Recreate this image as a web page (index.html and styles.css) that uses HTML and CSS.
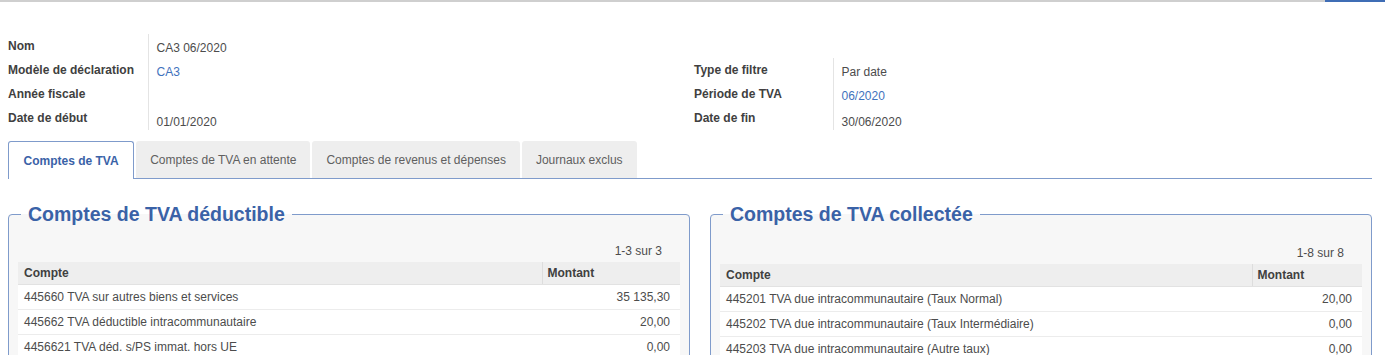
FILE: index.html
```html
<!DOCTYPE html>
<html lang="fr">
<head>
  <meta charset="UTF-8" />
  <title>CA3 06/2020</title>
  <link rel="stylesheet" href="styles.css">
</head>
<body>
  <div class="topbar">
    <div class="topbar-line"></div>
    <div class="topbar-btn"></div>
  </div>

  <div class="sheet">
    <div class="form-groups">
      <table class="group">
        <tr><td class="label">Nom</td><td class="value">CA3 06/2020</td></tr>
        <tr><td class="label">Modèle de déclaration</td><td class="value"><a href="#">CA3</a></td></tr>
        <tr><td class="label">Année fiscale</td><td class="value"></td></tr>
        <tr><td class="label">Date de début</td><td class="value low">01/01/2020</td></tr>
      </table>
      <table class="group group-right">
        <tr class="spacer"><td></td><td></td></tr>
        <tr><td class="label">Type de filtre</td><td class="value">Par date</td></tr>
        <tr><td class="label">Période de TVA</td><td class="value"><a href="#">06/2020</a></td></tr>
        <tr><td class="label">Date de fin</td><td class="value low">30/06/2020</td></tr>
      </table>
    </div>

    <ul class="tabs">
      <li class="tab active">Comptes de TVA</li>
      <li class="tab">Comptes de TVA en attente</li>
      <li class="tab">Comptes de revenus et dépenses</li>
      <li class="tab">Journaux exclus</li>
    </ul>

    <div class="panels">
      <fieldset class="box">
        <legend>Comptes de TVA déductible</legend>
        <div class="pager">1-3 sur 3</div>
        <table class="list">
          <thead>
            <tr><th>Compte</th><th class="amount-col">Montant</th></tr>
          </thead>
          <tbody>
            <tr><td>445660 TVA sur autres biens et services</td><td class="num">35 135,30</td></tr>
            <tr><td>445662 TVA déductible intracommunautaire</td><td class="num">20,00</td></tr>
            <tr><td>4456621 TVA déd. s/PS immat. hors UE</td><td class="num">0,00</td></tr>
          </tbody>
        </table>
      </fieldset>

      <fieldset class="box box-right">
        <legend>Comptes de TVA collectée</legend>
        <div class="pager">1-8 sur 8</div>
        <table class="list">
          <thead>
            <tr><th>Compte</th><th class="amount-col">Montant</th></tr>
          </thead>
          <tbody>
            <tr><td>445201 TVA due intracommunautaire (Taux Normal)</td><td class="num">20,00</td></tr>
            <tr><td>445202 TVA due intracommunautaire (Taux Intermédiaire)</td><td class="num">0,00</td></tr>
            <tr><td>445203 TVA due intracommunautaire (Autre taux)</td><td class="num">0,00</td></tr>
          </tbody>
        </table>
      </fieldset>
    </div>
  </div>
</body>
</html>
```

FILE: styles.css
```css
:root {
  --text-color: #4c4c4c;
  --link-color: #3f72bd;
  --title-color: #3a62a7;
  --frame-color: #7f9bcb;
  --tab-bg: #eeeeee;
  --box-bg: #f7f7f7;
}

* {
  box-sizing: border-box;
}

body {
  margin: 0;
  background-color: #ffffff;
  color: var(--text-color);
  font-family: "Liberation Sans", Arial, sans-serif;
  font-size: 12px;
  overflow: hidden;
}

a {
  color: var(--link-color);
  text-decoration: none;
}

.topbar {
  display: flex;
  height: 2px;
}

.topbar-line {
  flex: 1;
  background-color: #cfcfcf;
}

.topbar-btn {
  width: 60px;
  background-color: #3f6db5;
}

.sheet {
  padding: 32px 13px 0 8px;
}

.form-groups {
  display: grid;
  grid-template-columns: 686px 1fr;
}

.group {
  border-collapse: collapse;
}

.group td {
  height: 24px;
  padding: 0;
  vertical-align: top;
}

.group .label {
  width: 140px;
  padding-top: 5px;
  font-weight: bold;
  color: #404040;
  border-right: 1px solid #e4e4e4;
}

.group .value {
  padding: 7px 0 0 8px;
}

.group .value.low {
  padding-top: 9px;
}

.group-right .label {
  width: 139px;
}

.tabs {
  list-style: none;
  display: flex;
  margin: 11px 0 0;
  padding: 0;
  border-bottom: 1px solid var(--frame-color);
}

.tab {
  height: 37px;
  display: flex;
  align-items: center;
  padding: 0 13px;
  margin-right: 2px;
  margin-bottom: -1px;
  background-color: var(--tab-bg);
  border: 1px solid transparent;
  border-bottom: 0;
  border-radius: 3px 3px 0 0;
  color: #5f5f5f;
}

.tab.active {
  padding: 0 14.5px;
  background-color: #ffffff;
  border-color: var(--frame-color);
  color: var(--title-color);
  font-weight: bold;
  height: 38px;
}

.panels {
  display: grid;
  grid-template-columns: 682px 1fr;
  gap: 20px;
  margin-top: 24px;
}

.box {
  margin: 0;
  padding: 6px 9px 0 9px;
  background-color: var(--box-bg);
  border: 1px solid var(--frame-color);
  border-radius: 4px;
  min-width: 0;
}

.box legend {
  margin-left: 3px;
  padding: 0 7px;
  font-size: 19.5px;
  font-weight: bold;
  color: var(--title-color);
}

.box-right {
  padding-top: 8px;
}

.pager {
  text-align: right;
  padding: 12px 18px 4px 0;
  color: var(--text-color);
}

.list {
  width: 100%;
  border-collapse: collapse;
}

.list th {
  height: 22px;
  padding: 0 6px;
  text-align: left;
  font-weight: bold;
  background-color: #eeeeee;
  color: #404040;
  border-bottom: 1px solid #e2e2e2;
}

.list .amount-col {
  width: 138px;
  padding-left: 5px;
  border-left: 1px solid #dddddd;
}

.box-right .list .amount-col {
  width: 110px;
}

.list td {
  height: 25px;
  padding: 0 6px;
  background-color: #ffffff;
  border-bottom: 1px solid #ececec;
}

.list td.num {
  text-align: right;
  padding-right: 10px;
}
```
